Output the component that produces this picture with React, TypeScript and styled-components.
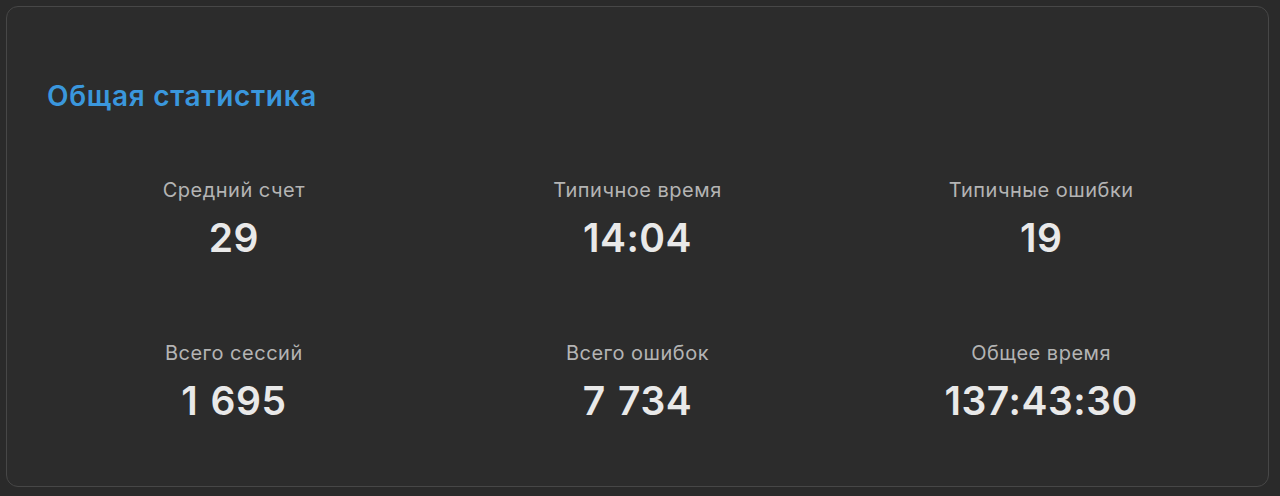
import styled, { createGlobalStyle } from 'styled-components';

const GlobalStyle = createGlobalStyle`
  html, body {
    margin: 0;
    background: #2a2a2a;
  }
  body {
    padding: 6px 11px 9px 6px;
    font-family: Inter, "Noto Sans", "Liberation Sans", sans-serif;
  }
`;

const Card = styled.section`
  box-sizing: border-box;
  height: 481px;
  background: #2c2c2c;
  border: 1px solid #474747;
  border-radius: 12px;
  padding: 72px 25px 0 25px;
`;

const Title = styled.h2`
  margin: 0 0 64px 15px;
  font-size: 28px;
  line-height: 34px;
  font-weight: 600;
  letter-spacing: 0.7px;
  color: #3a97dd;
`;

const Grid = styled.div`
  display: grid;
  grid-template-columns: repeat(3, 1fr);
  row-gap: 79px;
`;

const Stat = styled.div`
  display: flex;
  flex-direction: column;
  align-items: center;
  gap: 12px;
`;

const Label = styled.span`
  font-size: 20px;
  line-height: 26px;
  letter-spacing: 0.5px;
  color: #b4b4b4;
`;

const Value = styled.span`
  font-size: 39px;
  line-height: 46px;
  font-weight: 600;
  letter-spacing: 0.5px;
  word-spacing: 2px;
  color: #e9e9e9;
`;

const stats = [
  { label: 'Средний счет', value: '29' },
  { label: 'Типичное время', value: '14:04' },
  { label: 'Типичные ошибки', value: '19' },
  { label: 'Всего сессий', value: '1 695' },
  { label: 'Всего ошибок', value: '7 734' },
  { label: 'Общее время', value: '137:43:30' },
];

const App = () => (
  <>
    <GlobalStyle />
    <Card>
      <Title>Общая статистика</Title>
      <Grid>
        {stats.map((s) => (
          <Stat key={s.label}>
            <Label>{s.label}</Label>
            <Value>{s.value}</Value>
          </Stat>
        ))}
      </Grid>
    </Card>
  </>
);

export default App;
